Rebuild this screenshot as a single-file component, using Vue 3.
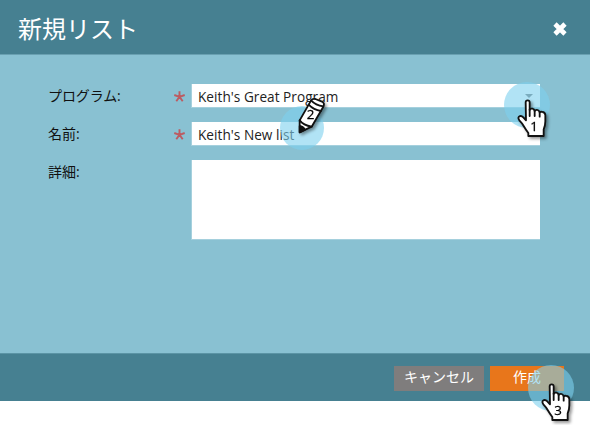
<script setup>
import { ref } from 'vue'

const program = ref("Keith's Great Program")
const name = ref("Keith's New list")
const details = ref('')
const pointers = [
  { step: 1, cls: 'on-program' },
  { step: 3, cls: 'on-create' },
]
</script>

<template>
  <div class="page">
    <header class="head">
      <h1>新規リスト</h1>
      <svg class="close" width="16" height="16" viewBox="0 0 16 16">
        <path d="M3 3L13 13M13 3L3 13" />
      </svg>
    </header>

    <main class="form">
      <div class="row">
        <span class="label wide">プログラム:</span>
        <svg class="star" width="13" height="13" viewBox="0 0 13 13">
          <path d="M6.5 6.8V1.2M6.5 6.8L1.3 5M6.5 6.8L11.7 5M6.5 6.8L3.3 11.2M6.5 6.8L9.7 11.2" />
        </svg>
        <div class="field select">{{ program }}<i class="arrow"></i></div>
      </div>
      <div class="row">
        <span class="label">名前:</span>
        <svg class="star" width="13" height="13" viewBox="0 0 13 13">
          <path d="M6.5 6.8V1.2M6.5 6.8L1.3 5M6.5 6.8L11.7 5M6.5 6.8L3.3 11.2M6.5 6.8L9.7 11.2" />
        </svg>
        <div class="field">{{ name }}</div>
      </div>
      <div class="row tall">
        <span class="label">詳細:</span>
        <div class="field area">{{ details }}</div>
      </div>
    </main>

    <footer class="foot">
      <button class="btn">キャンセル</button>
      <button class="btn primary">作成</button>
    </footer>

    <div v-for="p in pointers" :key="p.step" class="marker" :class="p.cls">
      <svg class="hand" width="32" height="42" viewBox="0 0 96 126">
        <path
          d="M26 13Q26 7 32 7Q38 7 38 13V36Q40 31 46 32Q52 33 53 39Q56 34 62 36Q67 38 68 43Q71 40 77 42Q85 44 85 52V70Q85 83 80 94V114H34V105Q27 96 20 84Q15 75 7 67Q2 60 6 56Q12 51 19 58L27 67Z"
        />
        <path class="crease" d="M38 34V54M53 38V54M68 43V56" />
        <text x="51" y="98">{{ p.step }}</text>
      </svg>
    </div>

    <div class="marker on-name">
      <svg class="pencil" width="34" height="40" viewBox="0 0 102 120">
        <path d="M20 109L20 73L54 14Q58 7 67 9L87 17Q96 21 91 32L56 92Z" />
        <path class="crease" d="M20 73Q31 88 56 92M54 13Q68 28 91 31M47 26Q62 42 84 45" />
        <path class="lead" d="M20 90L20 109L36 101Q30 91 20 90Z" />
        <text x="53" y="70">2</text>
      </svg>
    </div>
  </div>
</template>

<style>
body {
  margin: 0;
  background: #fff;
}
</style>

<style scoped>
.page {
  position: relative;
  width: 590px;
  height: 425px;
  display: flex;
  flex-direction: column;
  overflow: hidden;
  font-family: "Open Sans", "Noto Sans CJK JP", sans-serif;
  color: #222;
}
.head {
  box-sizing: border-box;
  height: 55px;
  padding: 2px 22px 0 18px;
  display: flex;
  align-items: center;
  justify-content: space-between;
  background: #468091;
  border-bottom: 1px solid #69a0b1;
}
h1 {
  margin: 0;
  font-size: 24px;
  line-height: 34px;
  font-weight: 400;
  font-family: "Noto Sans CJK JP", sans-serif;
  color: #fff;
}
.close {
  margin-top: 2px;
}
.close path {
  fill: none;
  stroke: #fff;
  stroke-width: 4.6;
}
.form {
  box-sizing: border-box;
  height: 298px;
  padding: 29px 50px 0 48px;
  display: flex;
  flex-direction: column;
  gap: 14px;
  background: #89c1d2;
}
.row {
  display: flex;
  align-items: center;
  height: 24px;
}
.row.tall {
  height: 80px;
  align-items: flex-start;
}
.label {
  width: 125px;
  font-size: 14px;
  line-height: 24px;
  white-space: nowrap;
  color: #111;
}
.wide {
  letter-spacing: -0.1px;
}
.star {
  margin-right: 5px;
}
.star path {
  fill: none;
  stroke: #bc5b61;
  stroke-width: 1.9;
}
.field {
  flex: 1;
  box-sizing: border-box;
  height: 24px;
  padding: 2px 7px 0 6px;
  display: flex;
  align-items: center;
  justify-content: space-between;
  background: #fff;
  border: 1px solid #a5d0dd;
  border-width: 0 0 1px 1px;
  font-size: 13.6px;
  letter-spacing: 0.04px;
  line-height: 21px;
}
.area {
  height: 80px;
  margin-left: 18px;
}
.arrow {
  border: 4px solid transparent;
  border-top-color: #777;
  border-bottom: 0;
  margin-bottom: 2px;
}
.foot {
  box-sizing: border-box;
  height: 48px;
  padding: 12px 26px 0;
  display: flex;
  justify-content: flex-end;
  gap: 6px;
  background: #468091;
  border-top: 1px solid #5b94a5;
}
.btn {
  width: 90px;
  height: 25px;
  padding: 0 0 4px;
  border: 0;
  background: #7f7d7d;
  color: #fff;
  font: 14px/21px "Noto Sans CJK JP", sans-serif;
}
.primary {
  width: 74px;
  background: #e8761b;
}
.marker {
  position: absolute;
  width: 46px;
  height: 46px;
  border-radius: 50%;
  background: rgba(125, 208, 238, 0.6);
}
.on-program {
  left: 504px;
  top: 82px;
}
.on-create {
  left: 528px;
  top: 365px;
}
.on-name {
  left: 280px;
  top: 106px;
  width: 44px;
  height: 44px;
}
.hand {
  position: absolute;
  left: 13px;
  top: 16px;
  overflow: visible;
  filter: drop-shadow(2px 2px 1.5px rgba(0, 0, 0, 0.4));
}
.on-create .hand {
  top: 17px;
}
.pencil {
  position: absolute;
  left: 13px;
  top: -10px;
  overflow: visible;
  filter: drop-shadow(2px 2px 1.5px rgba(0, 0, 0, 0.4));
}
.hand path,
.pencil path {
  fill: #fff;
  stroke: #111;
  stroke-width: 5.5;
  stroke-linejoin: round;
  stroke-linecap: round;
}
.hand .crease,
.pencil .crease {
  fill: none;
}
.pencil .lead {
  fill: #111;
}
.marker text {
  font: 40px "Open Sans", sans-serif;
  text-anchor: middle;
  fill: #000;
  stroke: #000;
  stroke-width: 0.8;
}
</style>
